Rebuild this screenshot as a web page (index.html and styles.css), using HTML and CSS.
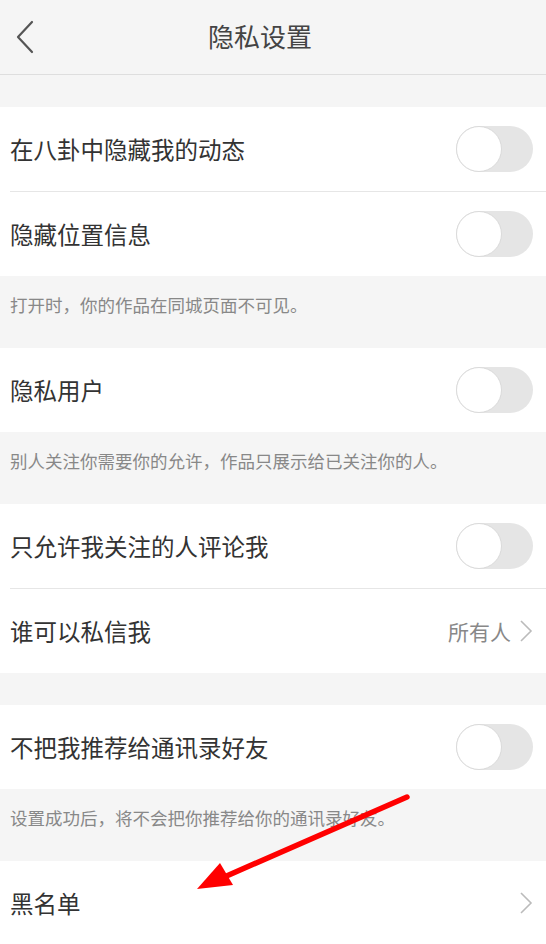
FILE: index.html
```html
<!DOCTYPE html>
<html lang="zh-CN">
  <head>
    <meta charset="UTF-8" />
    <meta name="viewport" content="width=device-width, initial-scale=1.0" />
    <title>隐私设置</title>
    <link rel="stylesheet" href="styles.css">
  </head>
  <body>
    <header class="nav">
      <svg class="back" width="20" height="34" viewBox="0 0 20 34">
        <path d="M17 2 L3 17 L17 32" fill="none" stroke="#555" stroke-width="2.2" stroke-linecap="round" stroke-linejoin="round"/>
      </svg>
      <span class="title">隐私设置</span>
    </header>

    <div class="gap"></div>
    <div class="group">
      <div class="row"><span>在八卦中隐藏我的动态</span><div class="switch"></div></div>
      <div class="row"><span>隐藏位置信息</span><div class="switch"></div></div>
    </div>
    <p class="note">打开时，你的作品在同城页面不可见。</p>

    <div class="group">
      <div class="row"><span>隐私用户</span><div class="switch"></div></div>
    </div>
    <p class="note">别人关注你需要你的允许，作品只展示给已关注你的人。</p>

    <div class="group">
      <div class="row"><span>只允许我关注的人评论我</span><div class="switch"></div></div>
      <div class="row">
        <span>谁可以私信我</span>
        <div class="value">所有人
          <svg class="chevron" width="14" height="24" viewBox="0 0 14 24"><path d="M2 2 L12 12 L2 22" fill="none" stroke="#bbb" stroke-width="1.6"/></svg>
        </div>
      </div>
    </div>

    <div class="gap"></div>
    <div class="group">
      <div class="row"><span>不把我推荐给通讯录好友</span><div class="switch"></div></div>
    </div>
    <p class="note">设置成功后，将不会把你推荐给你的通讯录好友。</p>

    <div class="group">
      <div class="row">
        <span>黑名单</span>
        <div class="value">
          <svg class="chevron" width="14" height="24" viewBox="0 0 14 24"><path d="M2 2 L12 12 L2 22" fill="none" stroke="#bbb" stroke-width="1.6"/></svg>
        </div>
      </div>
    </div>

    <!-- annotation arrow drawn over the page -->
    <svg class="arrow" width="546" height="944" viewBox="0 0 546 944">
      <line x1="407" y1="797" x2="222" y2="878" stroke="#ff0000" stroke-width="5.5" stroke-linecap="round"/>
      <polygon points="197,889 220,863 233,885" fill="#ff0000"/>
    </svg>
  </body>
</html>
```

FILE: styles.css
```css
body {
  margin: 0;
  background-color: #f5f5f5;
  font-family: "Noto Sans CJK SC", "Noto Sans", sans-serif;
  color: #333;
  height: 944px;
  overflow: hidden;
  position: relative;
}
.nav {
  height: 75px;
  padding-right: 26px;
  padding-bottom: 3px;
  box-sizing: border-box;
  border-bottom: 1px solid #dedede;
  display: flex;
  align-items: center;
  justify-content: center;
  position: relative;
}
.nav .back {
  position: absolute;
  left: 15px;
  top: 20px;
}
.nav .title {
  font-size: 26px;
  color: #444;
}
.gap {
  height: 32px;
}
.group {
  background-color: #fff;
}
.row {
  height: 84px;
  margin-left: 10px;
  padding-right: 13px;
  display: flex;
  align-items: center;
  justify-content: space-between;
  font-size: 23.5px;
  border-bottom: 1px solid #e6e6e6;
}
.row:last-child {
  border-bottom: none;
}
.switch {
  width: 77px;
  height: 46px;
  border-radius: 23px;
  background-color: #e5e5e5;
  position: relative;
}
.switch::before {
  content: "";
  position: absolute;
  left: 0;
  top: 0;
  width: 44px;
  height: 44px;
  border-radius: 50%;
  background-color: #fff;
  border: 1px solid #dadada;
}
.value {
  display: flex;
  align-items: center;
  gap: 8px;
  font-size: 21px;
  color: #888;
}
.note {
  margin: 0;
  height: 72px;
  box-sizing: border-box;
  padding: 17px 10px 0;
  font-size: 17.5px;
  line-height: 24px;
  color: #888;
}
.arrow {
  position: absolute;
  left: 0;
  top: 0;
  pointer-events: none;
}
```
